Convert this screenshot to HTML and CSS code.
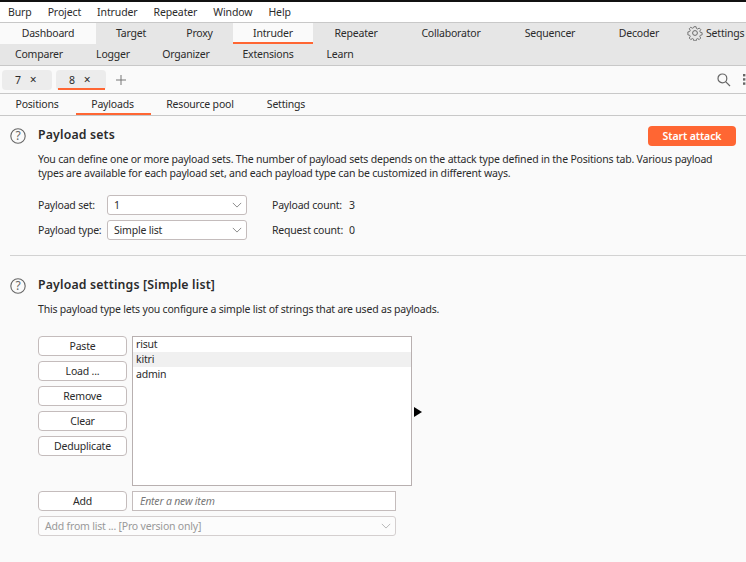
FILE: index.html
```html
<!DOCTYPE html>
<html lang="en">
<head>
<meta charset="utf-8">
<title>Burp Intruder</title>
<link rel="stylesheet" href="styles.css">
</head>
<body>
<div class="app">
  <nav class="menubar">
    <span>Burp</span><span>Project</span><span>Intruder</span><span>Repeater</span><span>Window</span><span>Help</span>
  </nav>
  <div class="maintabs">
    <div class="tabrow">
      <div class="tab w96 light">Dashboard</div>
      <div class="tab w70">Target</div>
      <div class="tab w67">Proxy</div>
      <div class="tab w80 active">Intruder</div>
      <div class="tab w86">Repeater</div>
      <div class="tab w104">Collaborator</div>
      <div class="tab w94">Sequencer</div>
      <div class="tab w84">Decoder</div>
      <div class="tab settings">
        <svg class="gear" width="16" height="16" viewBox="0 0 16 16" fill="none" stroke="#6a6a6a" stroke-width="1"><circle cx="8" cy="8" r="2.4"/><path d="M6.8 1h2.4l.4 2 1.4.6 1.7-1.1 1.7 1.7-1.1 1.7.6 1.4 2 .4v2.4l-2 .4-.6 1.4 1.1 1.7-1.7 1.7-1.7-1.1-1.4.6-.4 2H6.8l-.4-2-1.4-.6-1.7 1.1-1.7-1.7 1.1-1.7-.6-1.4-2-.4V6.8l2-.4.6-1.4-1.1-1.7 1.7-1.7 1.7 1.1 1.4-.6z" transform="translate(.8 .8) scale(.9)"/></svg>
        <span>Settings</span>
      </div>
    </div>
    <div class="tabrow">
      <div class="tab w78">Comparer</div>
      <div class="tab w70">Logger</div>
      <div class="tab w76">Organizer</div>
      <div class="tab w88">Extensions</div>
      <div class="tab w56">Learn</div>
    </div>
  </div>
  <div class="instances">
    <div class="chip">7<span class="x">×</span></div>
    <div class="chip current">8<span class="x">×</span></div>
    <svg class="plus" width="12" height="12" viewBox="0 0 12 12" stroke="#777" stroke-width="1"><path d="M6 1v10M1 6h10"/></svg>
    <div class="tools">
      <svg width="14" height="14" viewBox="0 0 14 14" fill="none" stroke="#666" stroke-width="1.2"><circle cx="5.4" cy="5.4" r="4.4"/><path d="M8.6 8.6l4.4 4.4"/></svg>
      <svg width="3" height="11" viewBox="0 0 3 11" fill="#666"><rect x="0" y="0" width="2.4" height="2.4"/><rect x="0" y="4.2" width="2.4" height="2.4"/><rect x="0" y="8.4" width="2.4" height="2.4"/></svg>
    </div>
  </div>
  <div class="subtabs">
    <div class="sub first">Positions</div>
    <div class="sub w75 active">Payloads</div>
    <div class="sub w98">Resource pool</div>
    <div class="sub w74">Settings</div>
  </div>
  <main class="content">
    <section class="sets">
      <div class="sethead">
        <svg class="help" width="16" height="16" viewBox="0 0 16 16"><circle cx="8" cy="8" r="7.2" fill="none" stroke="#666" stroke-width="1.1"/><text x="8" y="11.8" text-anchor="middle" class="helpq">?</text></svg>
        <h2>Payload sets</h2>
        <button class="attack">Start attack</button>
      </div>
      <p class="desc">You can define one or more payload sets. The number of payload sets depends on the attack type defined in the Positions tab. Various payload<br>types are available for each payload set, and each payload type can be customized in different ways.</p>
      <div class="formrows">
        <div class="frow">
          <label>Payload set:</label>
          <div class="select"><span>1</span><svg width="10" height="6" viewBox="0 0 12 7" fill="none" stroke="#777"><path d="M1 1l5 5 5-5"/></svg></div>
          <span class="count">Payload count:</span><span class="num">3</span>
        </div>
        <div class="frow">
          <label>Payload type:</label>
          <div class="select"><span>Simple list</span><svg width="10" height="6" viewBox="0 0 12 7" fill="none" stroke="#777"><path d="M1 1l5 5 5-5"/></svg></div>
          <span class="count">Request count:</span><span class="num">0</span>
        </div>
      </div>
    </section>
    <section class="settingsec">
      <div class="sethead">
        <svg class="help" width="16" height="16" viewBox="0 0 16 16"><circle cx="8" cy="8" r="7.2" fill="none" stroke="#666" stroke-width="1.1"/><text x="8" y="11.8" text-anchor="middle" class="helpq">?</text></svg>
        <h2>Payload settings [Simple list]</h2>
      </div>
      <p class="desc one">This payload type lets you configure a simple list of strings that are used as payloads.</p>
      <div class="listarea">
        <div class="btns">
          <button>Paste</button><button>Load ...</button><button>Remove</button><button>Clear</button><button>Deduplicate</button>
        </div>
        <ul class="list">
          <li>risut</li><li class="hl">kitri</li><li>admin</li>
        </ul>
        <div class="arrow"></div>
      </div>
      <div class="addrow">
        <button>Add</button>
        <div class="input">Enter a new item</div>
      </div>
      <div class="fromlist"><span>Add from list ... [Pro version only]</span><svg width="10" height="6" viewBox="0 0 12 7" fill="none" stroke="#aaa"><path d="M1 1l5 5 5-5"/></svg></div>
    </section>
  </main>
</div>
</body>
</html>
```
FILE: styles.css
```css
* { box-sizing: border-box; }
html, body { margin: 0; padding: 0; }
body { width: 746px; height: 562px; overflow: hidden; background: #fafafa; font-family: "Noto Sans", "Open Sans", sans-serif; font-size: 10.5px; letter-spacing: -0.2px; color: #2b2b2b; }
.app { width: 746px; height: 562px; overflow: hidden; }
.menubar { height: 23px; border-top: 2px solid #111; border-bottom: 1px solid #c8c8c8; background: #fff; display: flex; align-items: center; padding-left: 8px; gap: 16px; letter-spacing: -0.12px; }
.maintabs { background: #e6e6e6; border-bottom: 1px solid #c8c8c8; height: 43px; }
.tabrow { display: flex; height: 21px; }
.tab { display: flex; align-items: center; justify-content: center; flex: none; white-space: nowrap; padding-bottom: 1px; }
.tab.light, .tab.active { background: #fafafa; }
.tab.active { border-bottom: 2px solid #ff6633; padding: 0; }
.tab.settings { width: 70px; justify-content: flex-start; padding-left: 6px; gap: 3px; }
.w56 { width: 56px; } .w67 { width: 67px; } .w70 { width: 70px; } .w74 { width: 74px; } .w75 { width: 75px; } .w76 { width: 76px; } .w78 { width: 78px; } .w80 { width: 80px; } .w84 { width: 84px; } .w86 { width: 86px; } .w88 { width: 88px; } .w94 { width: 94px; } .w96 { width: 96px; } .w98 { width: 98px; } .w104 { width: 104px; }
.instances { height: 28px; border-bottom: 1px solid #c8c8c8; display: flex; align-items: center; padding-left: 2px; gap: 4px; background: #fafafa; }
.chip { width: 50px; height: 20px; border-radius: 4px; background: #ececec; display: flex; align-items: center; padding-left: 13px; gap: 9px; position: relative; }
.chip.current::after { content: ""; position: absolute; left: 2px; right: 1px; bottom: 0; height: 2px; background: #ff6633; }
.x { font-size: 12px; }
.plus { margin-left: 5px; }
.tools { margin-left: auto; display: flex; align-items: center; justify-content: space-between; width: 29px; }
.subtabs { height: 22px; border-bottom: 1px solid #c8c8c8; display: flex; background: #fafafa; }
.sub { display: flex; align-items: center; justify-content: center; flex: none; padding-bottom: 2px; }
.sub.first { width: 76px; padding-right: 2px; }
.sub.active { border-bottom: 2px solid #ff6633; padding: 0 2px 0 0; }
.content { padding: 0 0 0 10px; }
.sets { height: 140px; border-bottom: 1px solid #d2d2d2; padding-top: 10px; }
.sethead { display: flex; align-items: center; height: 20px; }
.help { flex: none; margin-right: 12px; }
.helpq { font-size: 12px; fill: #666; font-family: "Noto Sans", sans-serif; }
h2 { margin: 0 0 3px; font-size: 12.3px; font-weight: 600; letter-spacing: 0.17px; color: #2b2b2b; }
.attack { margin-left: auto; margin-right: 10px; width: 88px; height: 20px; border: 0; border-radius: 4px; background: #ff6633; color: #fff; font: 600 10.5px "Noto Sans", sans-serif; letter-spacing: -0.1px; }
.desc { margin: 6px 0 0 28px; line-height: 14px; white-space: nowrap; }
.formrows { margin: 15px 0 0 28px; display: flex; flex-direction: column; gap: 5px; }
.frow { display: flex; align-items: center; height: 20px; white-space: nowrap; }
.frow label { width: 69px; flex: none; }
.select { width: 140px; height: 20px; background: #fff; border: 1px solid #c4bcbc; border-radius: 3px; display: flex; align-items: center; justify-content: space-between; padding: 0 4px 0 6px; flex: none; }
.count { margin-left: 25px; width: 77px; flex: none; }
.settingsec { padding-top: 20px; }
.listarea { display: flex; margin: 20px 0 0 28px; position: relative; }
.btns { display: flex; flex-direction: column; gap: 5px; width: 89px; flex: none; }
button { font-family: "Noto Sans", sans-serif; font-size: 10.5px; letter-spacing: -0.2px; color: #2b2b2b; }
.btns button, .addrow button { width: 89px; height: 20px; background: #fff; border: 1px solid #c4bcbc; border-radius: 4px; padding: 0; }
.list { list-style: none; margin: 0 0 0 5px; padding: 0; width: 280px; height: 150px; background: #fff; border: 1px solid #b8b0b0; }
.list li { height: 15px; line-height: 15px; padding-left: 3px; }
.list li.hl { background: #f0f0f0; }
.arrow { position: absolute; left: 376px; top: 71px; width: 0; height: 0; border-left: 8px solid #000; border-top: 5px solid transparent; border-bottom: 5px solid transparent; }
.addrow { display: flex; margin: 5px 0 0 28px; gap: 5px; }
.input { width: 264px; height: 20px; background: #fff; border: 1px solid #c4bcbc; padding-left: 7px; line-height: 18px; font-style: italic; color: #777; }
.fromlist { margin: 5px 0 0 28px; width: 358px; height: 20px; border: 1px solid #d4cfcf; border-radius: 3px; background: #fcfcfc; color: #999; display: flex; align-items: center; justify-content: space-between; padding: 0 4px 0 6px; }
```
